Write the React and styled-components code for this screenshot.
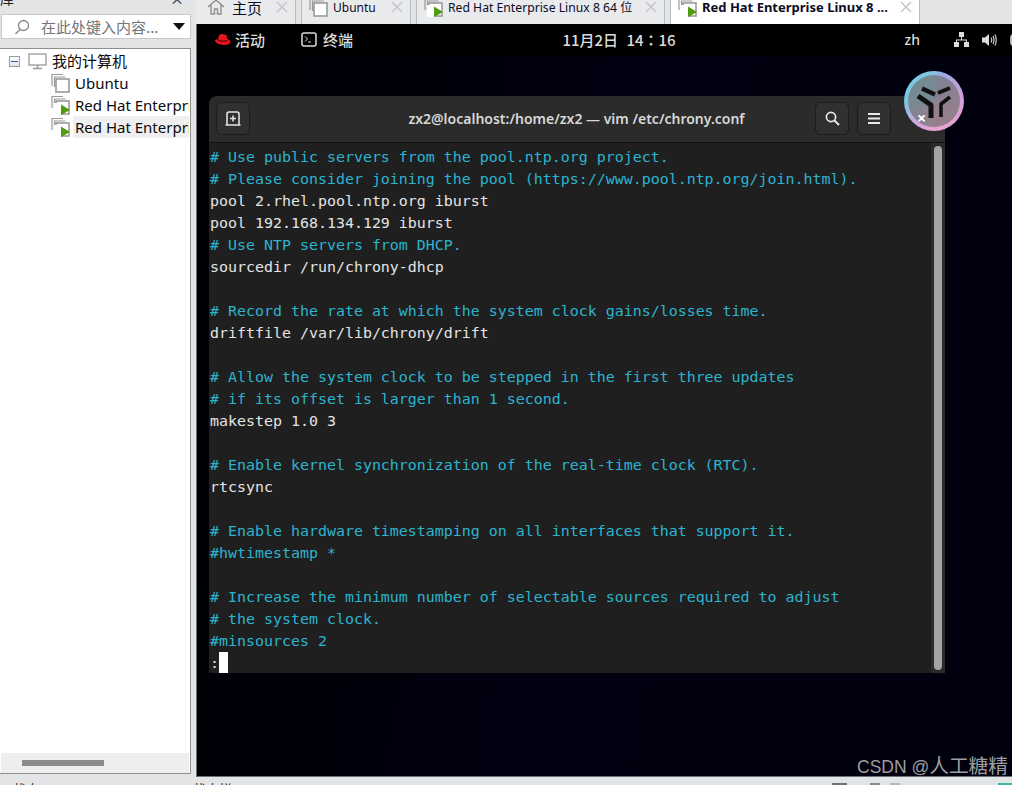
import styled, { createGlobalStyle } from 'styled-components';

const GlobalStyle = createGlobalStyle`
  html, body { margin: 0; padding: 0; background: #e3e4e6; }
  * { box-sizing: border-box; }
`

const uiFont = `"Noto Sans", "Noto Sans CJK SC", sans-serif`
const cjkFont = `"Noto Sans CJK SC", "Noto Sans", sans-serif`

const Page = styled.div`
  width: 1012px;
  height: 785px;
  overflow: hidden;
  position: relative;
  background: #e3e4e6;
  font-family: ${uiFont};
`

const Main = styled.div`
  display: flex;
  height: 777px;
`

const Sidebar = styled.div`
  width: 196px;
  flex: none;
  display: flex;
  flex-direction: column;
  padding-bottom: 3px;
`

const LibraryHead = styled.div`
  height: 14px;
  overflow: hidden;
  display: flex;
  justify-content: space-between;
  padding: 0 12px 0 0;
  font-family: ${cjkFont};
  font-size: 14px;
  line-height: 14px;
  color: #222;
  & > span { margin-top: -9px; }
`

const SearchBox = styled.div`
  width: 190px;
  height: 25px;
  margin-left: 1px;
  background: #fff;
  border: 1px solid #c6c8ca;
  display: flex;
  align-items: center;
  padding-left: 12px;
  font-family: ${cjkFont};
  font-size: 15px;
  color: #71757a;
`

const SearchText = styled.span`
  margin-left: 11px;
  flex: 1;
  white-space: nowrap;
`

const Caret = styled.span`
  width: 0;
  height: 0;
  border-left: 6px solid transparent;
  border-right: 6px solid transparent;
  border-top: 7px solid #111;
  margin-right: 5px;
`

const TreePanel = styled.div`
  width: 191px;
  flex: 1;
  margin-top: 9px;
  background: #fff;
  border: 1px solid #8c9095;
  border-left: none;
  padding-top: 1px;
  display: flex;
  flex-direction: column;
  overflow: hidden;
`

const TreeRow = styled.div`
  height: 22px;
  display: flex;
  align-items: center;
  flex: none;
  padding-left: ${props => props.$indent}px;
`

const Expander = styled.span`
  width: 11px;
  height: 11px;
  border: 1px solid #9a9ea3;
  background: linear-gradient(#fff, #dfe3ea);
  display: flex;
  align-items: center;
  justify-content: center;
  margin-right: 8px;
  &::before {
    content: '';
    width: 7px;
    height: 1px;
    background: #2f5c9e;
  }
`

const TreeLabel = styled.span`
  height: 22px;
  line-height: 22px;
  flex: 1;
  min-width: 0;
  margin-left: ${props => props.$gap}px;
  margin-right: 1px;
  padding-left: 2px;
  font-size: 15px;
  color: #0a0a0a;
  white-space: nowrap;
  overflow: hidden;
  background: ${props => (props.$selected ? '#efefef' : 'transparent')};
`

const RootLabel = styled(TreeLabel)`
  font-family: ${cjkFont};
  font-size: 15px;
  line-height: 21px;
`

const TreeSpacer = styled.div`
  flex: 1;
`

const HScroll = styled.div`
  height: 20px;
  margin: 0 1px;
  background: #eeeeee;
  display: flex;
  align-items: center;
  padding-left: 21px;
  flex: none;
`

const HThumb = styled.div`
  width: 82px;
  height: 6px;
  background: #8b8b8b;
`

const Workspace = styled.div`
  flex: 1;
  min-width: 0;
  display: flex;
  flex-direction: column;
`

const TabBar = styled.div`
  height: 24px;
  flex: none;
  display: flex;
  gap: 5px;
`

const Tab = styled.div`
  width: ${props => props.$width}px;
  height: 24px;
  overflow: hidden;
  display: flex;
  align-items: center;
  padding: 0 7px 10px ${props => props.$pad}px;
  background: ${props => (props.$active ? '#fff' : '#e9eaec')};
  border-right: 1px solid #b9bcc0;
  border-left: ${props => (props.$first ? 'none' : '1px solid #b9bcc0')};
  color: #0b0b25;
  font-weight: ${props => (props.$active ? 700 : 400)};
  white-space: nowrap;
`

const TabTitle = styled.span`
  flex: 1;
  margin-left: ${props => props.$gap}px;
  font-family: ${props => (props.$cjk ? cjkFont : uiFont)};
  font-size: ${props => props.$size}px;
  overflow: hidden;
`

const TabClose = styled.svg`
  width: 12px;
  height: 12px;
  flex: none;
`

const Desktop = styled.div`
  flex: 1;
  min-height: 0;
  display: flex;
  flex-direction: column;
  border-left: 1px solid #6d7074;
  border-bottom: 1px solid #6d7074;
  background: linear-gradient(100deg, #000004 0%, #000010 45%, #00000e 100%);
`

const TopBar = styled.div`
  height: 32px;
  flex: none;
  background: #000;
  color: #dcdcdc;
  display: grid;
  grid-template-columns: 1fr auto 1fr;
  align-items: center;
  font-family: ${cjkFont};
  font-size: 15px;
  font-weight: 500;
  padding: 0 0 1px 17px;
`

const TopLeft = styled.div`
  display: flex;
  align-items: center;
`

const TopItem = styled.span`
  display: flex;
  align-items: center;
  gap: ${props => props.$gap}px;
  margin-right: 36px;
`

const Clock = styled.span`
  margin-left: 12px;
  font-family: "Noto Sans CJK JP", sans-serif;
  word-spacing: 5px;
  white-space: nowrap;
`

const TopRight = styled.div`
  display: flex;
  align-items: center;
  justify-content: flex-end;
  gap: 13px;
  overflow: hidden;
`

const Lang = styled.span`
  margin-right: 21px;
  font-family: ${uiFont};
  font-size: 14px;
`

const Battery = styled.span`
  width: 10px;
  height: 14px;
  margin-right: -8px;
  border: 2px solid #bbb;
  border-radius: 7px;
`

const WindowArea = styled.div`
  flex: 1;
  padding: 40px 0 0 12px;
`

const TermWindow = styled.div`
  width: 736px;
  height: 577px;
  display: flex;
  flex-direction: column;
  border-radius: 8px 8px 0 0;
  overflow: hidden;
`

const TermHeader = styled.div`
  height: 47px;
  flex: none;
  background: #2b2b2b;
  border-bottom: 1px solid #111;
  display: flex;
  align-items: center;
  padding: 0 54px 1px 7px;
  gap: 8px;
`

const HeadButton = styled.div`
  width: 34px;
  height: 33px;
  background: #303030;
  border: 1px solid #1c1c1c;
  border-radius: 6px;
  display: flex;
  align-items: center;
  justify-content: center;
  flex: none;
`

const TermTitle = styled.div`
  flex: 1;
  text-align: center;
  color: #d8d8d8;
  font-size: 14px;
  font-weight: 600;
  padding-left: 88px;
  padding-bottom: 1px;
  white-space: nowrap;
`

const TermBody = styled.div`
  flex: 1;
  min-height: 0;
  display: flex;
  background: #1f1f1f;
`

const TermText = styled.div`
  flex: 1;
  padding: 3px 0 0 1px;
  font-family: "DejaVu Sans Mono", monospace;
  font-size: 14.94px;
  line-height: 22px;
  overflow: hidden;
`

const Line = styled.div`
  height: 22px;
  white-space: pre;
  color: ${props => (props.$comment ? '#2cb4cf' : '#e4e4e4')};
`

const Cursor = styled.span`
  display: inline-block;
  width: 9px;
  height: 22px;
  background: #fff;
  vertical-align: top;
`

const ScrollTrack = styled.div`
  width: 14px;
  flex: none;
  background: #2b2b2b;
  padding: 3px;
`

const ScrollThumb = styled.div`
  height: 100%;
  background: #a4a4a4;
  border-radius: 4px;
`

const Widget = styled.div`
  position: absolute;
  left: 904px;
  top: 71px;
  width: 60px;
  height: 60px;
  border-radius: 50%;
  padding: 4px;
  background: conic-gradient(from 20deg, #9fa8e8, #d89fd8 70deg, #eca3cc 150deg, #cfa6e0 200deg, #79c6e4 250deg, #7dcbe2 330deg, #9fa8e8);
`

const WidgetInner = styled.div`
  width: 100%;
  height: 100%;
  border-radius: 50%;
  background: rgba(115, 115, 115, 0.72);
  position: relative;
`

const WidgetClose = styled.span`
  position: absolute;
  left: 9px;
  top: 35px;
  color: #fff;
  font-size: 16px;
  line-height: 16px;
  font-weight: 700;
`

const Watermark = styled.div`
  position: absolute;
  left: 857px;
  top: 753px;
  font-family: "Liberation Sans", "Noto Sans CJK SC", sans-serif;
  font-size: 17.5px;
  line-height: 24px;
  color: #9e9e9e;
  white-space: nowrap;
`

const WatermarkName = styled.span`
  font-family: "Noto Sans CJK SC", sans-serif;
  font-size: 19.7px;
`

const StatusStrip = styled.div`
  height: 8px;
  position: relative;
  overflow: hidden;
`

const StripText = styled.span`
  position: absolute;
  left: ${props => props.$left}px;
  top: 5px;
  font-family: ${cjkFont};
  font-size: 13px;
  line-height: 14px;
  color: #222;
`

const StripMark = styled.span`
  position: absolute;
  left: ${props => props.$left}px;
  top: 6px;
  width: ${props => props.$width}px;
  height: 2px;
  background: ${props => props.$color};
`

const VmIcon = ({ play }) => (
  <svg width="19" height="20" viewBox="0 0 19 20" fill="none" style={{ flex: 'none' }}>
    <path d="M1 13V1.5H12" stroke="#9a9a9a" strokeWidth="1.2" />
    <path d="M3.5 14V4H14.5" stroke="#9a9a9a" strokeWidth="1.2" />
    <rect x="5" y="6" width="13" height="13" fill="#fff" stroke="#9a9a9a" strokeWidth="1.6" />
    {play && <rect x="3" y="8" width="7" height="12" fill="#fff" />}
    {play && <path d="M10 9.5L19 15L10 20Z" fill="#4f9d0f" />}
  </svg>
)

const CloseX = ({ color = '#c4c6c9' }) => (
  <TabClose viewBox="0 0 12 12">
    <path d="M1 1L11 11M11 1L1 11" stroke={color} strokeWidth="1.5" />
  </TabClose>
)

const comment = true
const lines = [
  ['# Use public servers from the pool.ntp.org project.', comment],
  ['# Please consider joining the pool (https://www.pool.ntp.org/join.html).', comment],
  ['pool 2.rhel.pool.ntp.org iburst'],
  ['pool 192.168.134.129 iburst'],
  ['# Use NTP servers from DHCP.', comment],
  ['sourcedir /run/chrony-dhcp'],
  [' '],
  ['# Record the rate at which the system clock gains/losses time.', comment],
  ['driftfile /var/lib/chrony/drift'],
  [' '],
  ['# Allow the system clock to be stepped in the first three updates', comment],
  ['# if its offset is larger than 1 second.', comment],
  ['makestep 1.0 3'],
  [' '],
  ['# Enable kernel synchronization of the real-time clock (RTC).', comment],
  ['rtcsync'],
  [' '],
  ['# Enable hardware timestamping on all interfaces that support it.', comment],
  ['#hwtimestamp *', comment],
  [' '],
  ['# Increase the minimum number of selectable sources required to adjust', comment],
  ['# the system clock.', comment],
  ['#minsources 2', comment],
]

export default function App() {
  return (
    <Page>
      <GlobalStyle />
      <Main>
        <Sidebar>
          <LibraryHead>
            <span>库</span>
            <span>×</span>
          </LibraryHead>
          <SearchBox>
            <svg width="16" height="16" viewBox="0 0 16 16" fill="none" style={{ flex: 'none' }}>
              <circle cx="9.5" cy="6.5" r="5" stroke="#8a8a8a" strokeWidth="1.3" />
              <path d="M6 10.5L1.5 15" stroke="#8a8a8a" strokeWidth="1.5" />
            </svg>
            <SearchText>在此处键入内容...</SearchText>
            <Caret />
          </SearchBox>
          <TreePanel>
            <TreeRow $indent={9}>
              <Expander />
              <svg width="19" height="17" viewBox="0 0 19 17" fill="none" style={{ flex: 'none' }}>
                <rect x="1" y="1" width="17" height="11" fill="#fff" stroke="#9a9a9a" strokeWidth="1.3" />
                <path d="M9.5 12V15M5 15.5H14" stroke="#9a9a9a" strokeWidth="1.5" />
              </svg>
              <RootLabel $gap={3}>我的计算机</RootLabel>
            </TreeRow>
            <TreeRow $indent={51}>
              <VmIcon />
              <TreeLabel $gap={3}>Ubuntu</TreeLabel>
            </TreeRow>
            <TreeRow $indent={51}>
              <VmIcon play />
              <TreeLabel $gap={3}>Red Hat Enterprise Linux 8 64 位</TreeLabel>
            </TreeRow>
            <TreeRow $indent={51}>
              <VmIcon play />
              <TreeLabel $gap={3} $selected>Red Hat Enterprise Linux 8 64 位</TreeLabel>
            </TreeRow>
            <TreeSpacer />
            <HScroll>
              <HThumb />
            </HScroll>
          </TreePanel>
        </Sidebar>
        <Workspace>
          <TabBar>
            <Tab $width={100} $pad={11} $first>
              <svg width="18" height="16" viewBox="0 0 18 16" fill="none" style={{ flex: 'none' }}>
                <path d="M1 8L9 1L17 8M4 6V15H7.5V10H10.5V15H14V6" stroke="#8f8f8f" strokeWidth="1.4" />
              </svg>
              <TabTitle $gap={7} $size={15} $cjk>主页</TabTitle>
              <CloseX />
            </Tab>
            <Tab $width={110} $pad={7}>
              <VmIcon />
              <TabTitle $gap={5} $size={12}>Ubuntu</TabTitle>
              <CloseX />
            </Tab>
            <Tab $width={249} $pad={7}>
              <VmIcon play />
              <TabTitle $gap={5} $size={12.2}>Red Hat Enterprise Linux 8 64 位</TabTitle>
              <CloseX />
            </Tab>
            <Tab $width={250} $pad={7} $active>
              <VmIcon play />
              <TabTitle $gap={5} $size={13}>Red Hat Enterprise Linux 8 ...</TabTitle>
              <CloseX />
            </Tab>
          </TabBar>
          <Desktop>
            <TopBar>
              <TopLeft>
                <TopItem $gap={4}>
                  <svg width="17" height="13" viewBox="0 0 17 13">
                    <path d="M4 6.5C4.5 4 5 1 7.5 1C9 1 9.5 1.8 11 1.6C12.5 1.5 13 3.5 13.3 6C15 6.8 16.5 7.6 16.5 9C16.5 11 13 12 10 12C6 12 1 10 1 7.8C1 6.6 2.5 6 4 6.5Z" fill="#e8141c" />
                    <path d="M3.5 6.5C6 8.3 10 8.8 13.4 7.6" stroke="#000" strokeWidth="0.8" fill="none" />
                  </svg>
                  活动
                </TopItem>
                <TopItem $gap={6}>
                  <svg width="16" height="15" viewBox="0 0 16 15" fill="none">
                    <rect x="1" y="1" width="14" height="13" rx="2" stroke="#dcdcdc" strokeWidth="1.5" />
                    <path d="M4 4.5L6.5 7L4 9.5M7 10H10" stroke="#dcdcdc" strokeWidth="1" />
                  </svg>
                  终端
                </TopItem>
              </TopLeft>
              <Clock>11月2日 14：16</Clock>
              <TopRight>
                <Lang>zh</Lang>
                <svg width="15" height="15" viewBox="0 0 15 15" fill="#dcdcdc">
                  <rect x="5" y="0" width="5" height="5" />
                  <rect x="0" y="10" width="5" height="5" />
                  <rect x="10" y="10" width="5" height="5" />
                  <path d="M7 5H8V7.5H13V10H12V8.5H3V10H2V7.5H7Z" />
                </svg>
                <svg width="15" height="14" viewBox="0 0 15 14" fill="none">
                  <path d="M0 4.5H3L7 1V13L3 9.5H0Z" fill="#dcdcdc" />
                  <path d="M9 4.5Q10.5 7 9 9.5M11 3Q13 7 11 11M13 1.5Q15.5 7 13 12.5" stroke="#dcdcdc" strokeWidth="1.1" />
                </svg>
                <Battery />
              </TopRight>
            </TopBar>
            <WindowArea>
              <TermWindow>
                <TermHeader>
                  <HeadButton>
                    <svg width="16" height="15" viewBox="0 0 16 15" fill="none">
                      <path d="M2 14V3Q2 1 4 1H12Q14 1 14 3V14" stroke="#e4e4e4" strokeWidth="1.6" />
                      <path d="M0.5 14H15.5" stroke="#e4e4e4" strokeWidth="1.4" />
                      <path d="M8 4.5V10.5M5 7.5H11" stroke="#e4e4e4" strokeWidth="1.6" />
                    </svg>
                  </HeadButton>
                  <TermTitle>zx2@localhost:/home/zx2 — vim /etc/chrony.conf</TermTitle>
                  <HeadButton>
                    <svg width="15" height="15" viewBox="0 0 15 15" fill="none">
                      <circle cx="6" cy="6" r="4.6" stroke="#e8e8e8" strokeWidth="1.7" />
                      <path d="M9.5 9.5L14 14" stroke="#e8e8e8" strokeWidth="2" />
                    </svg>
                  </HeadButton>
                  <HeadButton>
                    <svg width="12" height="11" viewBox="0 0 12 11" fill="#e8e8e8">
                      <rect y="0" width="12" height="2" />
                      <rect y="4.5" width="12" height="2" />
                      <rect y="9" width="12" height="2" />
                    </svg>
                  </HeadButton>
                </TermHeader>
                <TermBody>
                  <TermText>
                    {lines.map(([text, isComment], i) => (
                      <Line key={i} $comment={isComment}>{text}</Line>
                    ))}
                    <Line>:<Cursor /></Line>
                  </TermText>
                  <ScrollTrack>
                    <ScrollThumb />
                  </ScrollTrack>
                </TermBody>
              </TermWindow>
            </WindowArea>
          </Desktop>
        </Workspace>
      </Main>
      <StatusStrip>
        <StripText $left={13}>状态</StripText>
        <StripText $left={193}>状态栏</StripText>
        <StripMark $left={832} $width={15} $color="#6f7175" />
        <StripMark $left={870} $width={10} $color="#8a8c90" />
        <StripMark $left={890} $width={10} $color="#b4b6b9" />
        <StripMark $left={998} $width={14} $color="#3fb6a8" />
      </StatusStrip>
      <Widget>
        <WidgetInner>
          <svg width="52" height="52" viewBox="908 75 52 52" fill="none" stroke="#111" strokeLinejoin="round">
            <path d="M922 88.5L935 94.5" strokeWidth="4.5" />
            <path d="M938 93L950 88" strokeWidth="4" />
            <path d="M918 96L931 105V118" strokeWidth="5" />
            <path d="M950 97L941 104V117" strokeWidth="3.5" />
          </svg>
          <WidgetClose>×</WidgetClose>
        </WidgetInner>
      </Widget>
      <Watermark>CSDN @<WatermarkName>人工糖精</WatermarkName></Watermark>
    </Page>
  )
}
